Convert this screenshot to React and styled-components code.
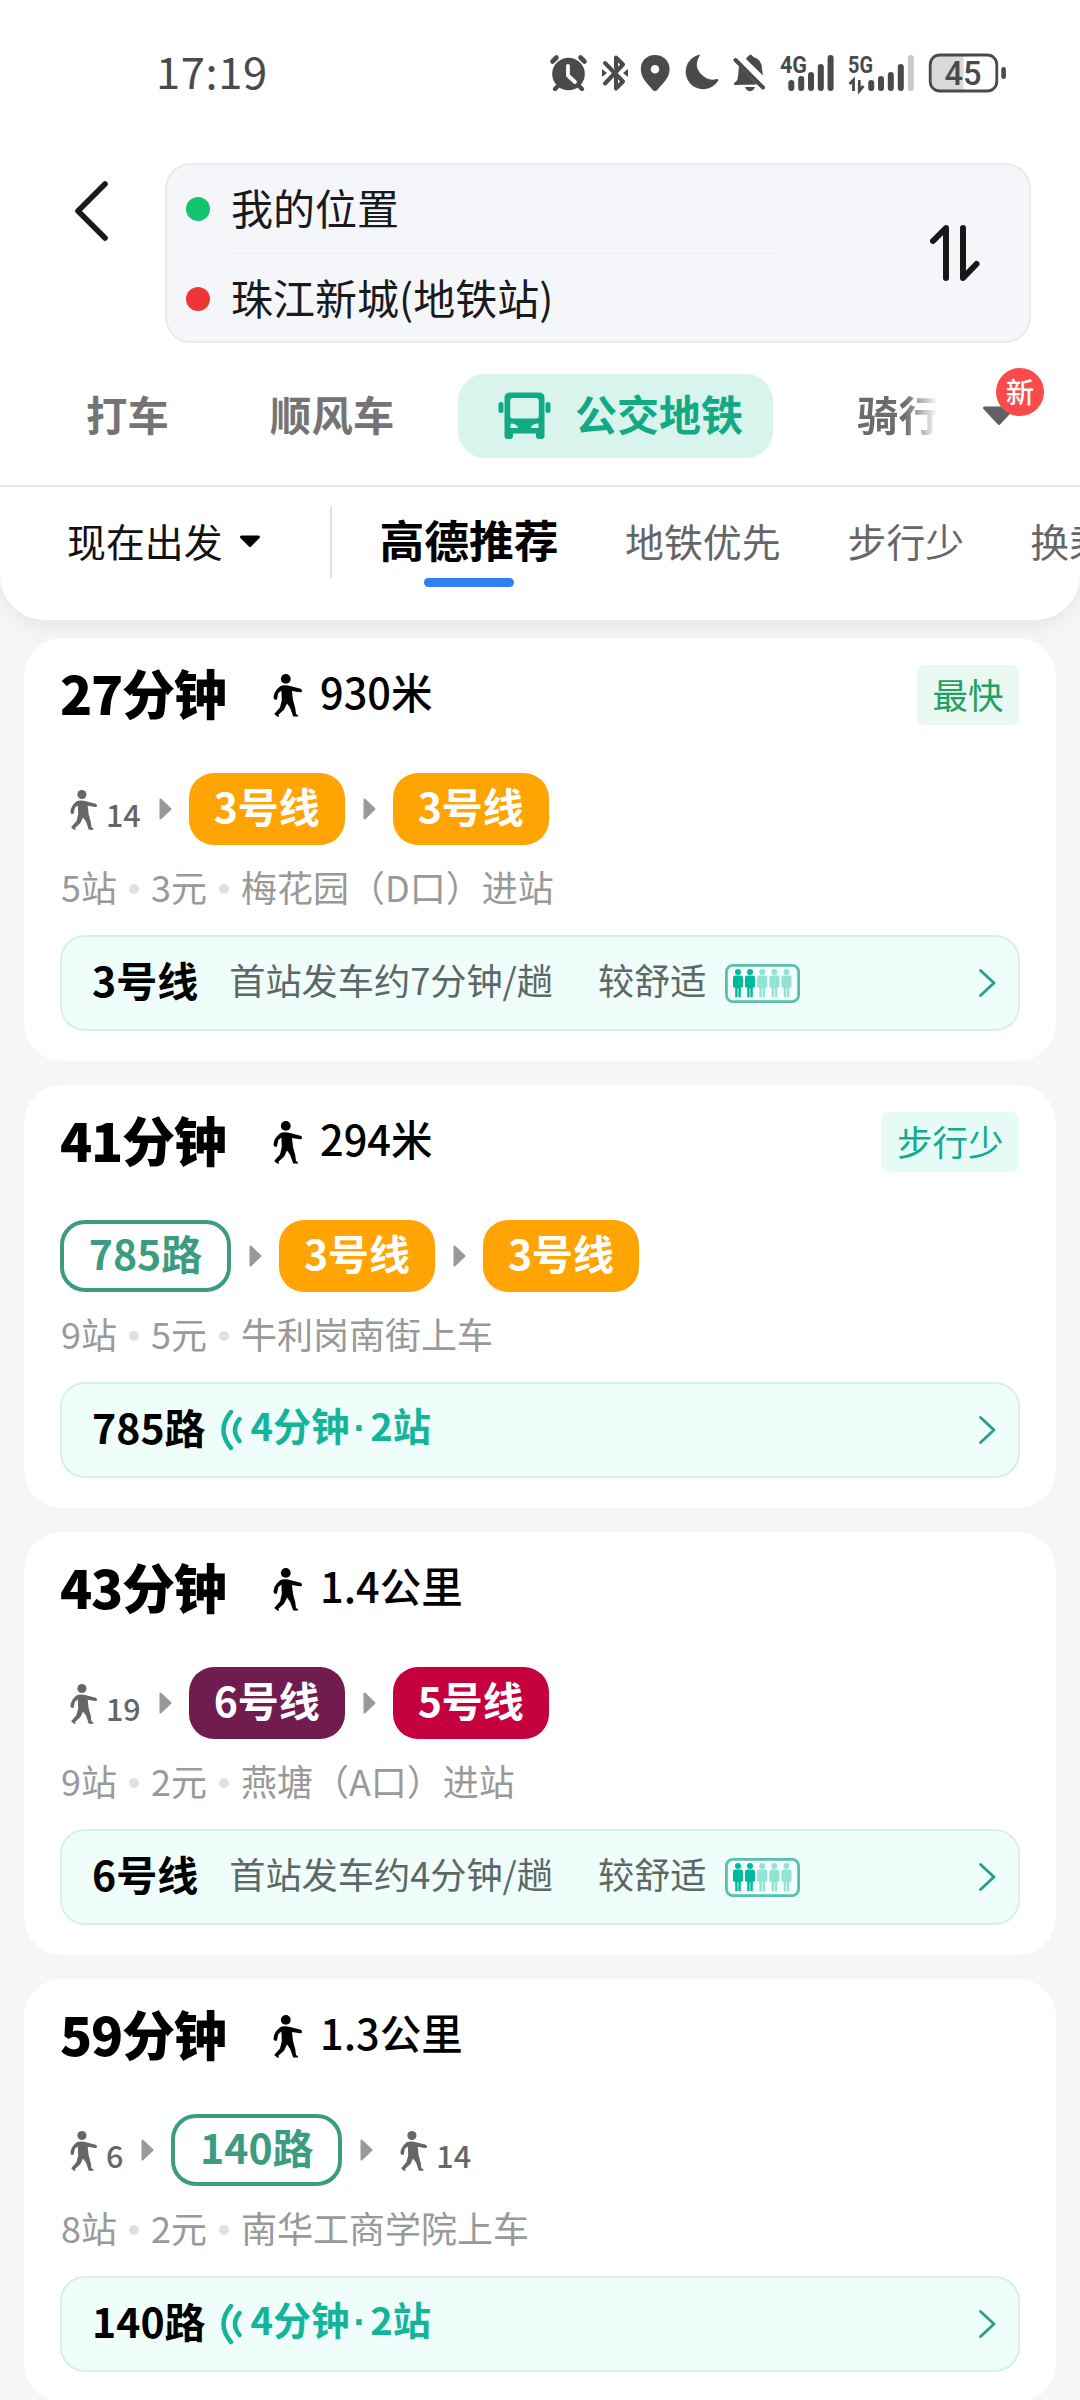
import React from "react";
import styled, { createGlobalStyle } from "styled-components";

const Global = createGlobalStyle`
  *, *::before, *::after { box-sizing: border-box; }
  html, body { margin: 0; background: #f4f6f8; }
  body {
    width: 1080px;
    font-family: "Noto Sans CJK SC", "Noto Sans", sans-serif;
    color: #000;
  }
  svg { display: block; flex: none; }
`;

const Screen = styled.div`
  width: 1080px;
  height: 2400px;
  overflow: hidden;
  display: flex;
  flex-direction: column;
  background: #f4f6f8;
`;

/* ---------- header ---------- */
const Header = styled.header`
  flex: none;
  height: 620px;
  background: #fff;
  border-radius: 0 0 45px 45px;
  box-shadow: 0 6px 22px rgba(0, 0, 0, 0.07);
  position: relative;
`;

const StatusBar = styled.div`
  height: 146px;
  padding: 0 72px 0 156px;
  display: flex;
  align-items: center;
  justify-content: space-between;
`;

const Clock = styled.span`
  font-size: 43.5px;
  line-height: 60px;
  letter-spacing: 0.6px;
  padding-bottom: 5px;
  color: #4a4a4a;
`;

const SearchRow = styled.div`
  display: flex;
  height: 180px;
  margin-top: 17px;
  padding: 0 49px 0 72px;
`;

const BackButton = styled.div`
  width: 93px;
  padding-top: 15px;
`;

const SearchBox = styled.div`
  flex: 1;
  display: flex;
  align-items: center;
  justify-content: space-between;
  border: 2px solid #e8eaec;
  border-radius: 26px;
  background: #f4f6fa;
  padding: 0 49px 0 19px;
`;

const Places = styled.div`
  width: 700px;
  padding-top: 1px;
`;

const Place = styled.div`
  height: 89px;
  display: flex;
  align-items: center;
  gap: 21px;
  font-size: 42px;
  line-height: 60px;
  color: #1a1a1a;
  span { position: relative; top: -2px; }
`;

const Dot = styled.i`
  width: 24px;
  height: 24px;
  border-radius: 50%;
  background: ${(p) => p.$color};
`;

const Separator = styled.div`
  height: 1px;
  margin-left: 46px;
  background: linear-gradient(to right, #eceef1 80%, transparent);
`;

const Modes = styled.nav`
  height: 142px;
  display: flex;
  align-items: center;
  padding: 4px 0 0 86px;
  font-size: 41.3px;
  font-weight: 700;
  line-height: 60px;
  color: #747474;
`;

const Mode = styled.span`
  flex: none;
  width: ${(p) => p.$width}px;
  letter-spacing: 0.2px;
  padding-bottom: 6px;
`;

const FadingMode = styled(Mode)`
  margin-left: 84px;
  white-space: nowrap;
  background: linear-gradient(to right, #6c6c6c 55%, rgba(150, 150, 150, 0.25) 88%, rgba(150, 150, 150, 0) 93%);
  background-clip: text;
  color: transparent;
`;

const ActiveMode = styled.div`
  flex: none;
  width: 315px;
  height: 84px;
  border-radius: 27px;
  background: #d9f4ec;
  display: flex;
  align-items: center;
  padding-left: 40px;
  gap: 24px;
  font-size: 42px;
  color: #12aa85;
  span { padding-bottom: 6px; }
`;

const MoreModes = styled.div`
  position: relative;
  width: 64px;
  height: 50px;
  margin-left: 39px;
  padding-top: 15px;
`;

const NewBadge = styled.span`
  position: absolute;
  left: 14px;
  top: -23px;
  width: 48px;
  height: 48px;
  border-radius: 50%;
  background: #fa4a4a;
  color: #fff;
  font-size: 28.5px;
  font-weight: 500;
  line-height: 45px;
  text-align: center;
`;

const SortRow = styled.div`
  height: 135px;
  border-top: 2px solid #e4e5e6;
  display: flex;
  align-items: flex-start;
  overflow: hidden;
  padding-left: 67px;
  font-size: 38.9px;
  line-height: 60px;
  white-space: nowrap;
  color: #666;
`;

const Depart = styled.div`
  flex: none;
  display: flex;
  align-items: center;
  gap: 16px;
  width: 263px;
  padding-top: 23px;
  color: #111;
  svg { margin-top: 2px; }
`;

const VLine = styled.i`
  flex: none;
  width: 2px;
  height: 72px;
  margin-top: 19px;
  background: #e0e0e0;
`;

const SortItem = styled.div`
  flex: none;
  padding-top: 23px;
  margin-left: ${(p) => p.$gap}px;
`;

const SortActive = styled.div`
  flex: none;
  width: 180px;
  margin-left: 47px;
  padding-top: 22px;
  display: flex;
  flex-direction: column;
  align-items: center;
  font-size: 44.8px;
  font-weight: 700;
  color: #000;
  &::after {
    content: "";
    width: 90px;
    height: 9px;
    margin-top: 9px;
    border-radius: 5px;
    background: #2f80f3;
  }
`;

/* ---------- routes ---------- */
const List = styled.main`
  padding: 18px 24px 0;
  display: flex;
  flex-direction: column;
  gap: 24px;
`;

const Card = styled.section`
  position: relative;
  flex: none;
  height: 423px;
  border-radius: 38px;
  background: #fff;
  padding: 27px 36px 30px;
`;

const CardHead = styled.div`
  height: 60px;
  display: flex;
  align-items: center;
`;

const Duration = styled.span`
  width: 213px;
  font-size: 53px;
  font-weight: 900;
  line-height: 60px;
  letter-spacing: -1.3px;
  position: relative;
  top: -3px;
`;

const Distance = styled.span`
  flex: 1;
  margin-left: 17px;
  font-size: 41.5px;
  font-weight: 500;
  line-height: 60px;
  position: relative;
  top: -4px;
`;

const Tag = styled.span`
  height: 60px;
  margin-right: 1px;
  padding: 0 15.5px;
  border-radius: 8px;
  font-size: 35.5px;
  line-height: 57px;
  color: ${(p) => (p.$teal ? "#12ab8f" : "#1da264")};
  background: ${(p) => (p.$teal ? "#e6faf6" : "#e9f8f1")};
`;

const Legs = styled.div`
  height: 72px;
  margin-top: 48px;
  display: flex;
  align-items: center;
`;

const WalkLeg = styled.div`
  display: flex;
  align-items: center;
  padding-left: 10px;
  gap: 8px;
  color: #666;
  font-size: 30.5px;
  font-weight: 500;
  line-height: 40px;
  span { position: relative; top: 5px; }
`;

const LinePill = styled.div`
  height: 72px;
  width: ${(p) => (p.$bus ? 171 : 156)}px;
  border-radius: 25px;
  border: ${(p) => (p.$bus ? "4px solid #3d9c80" : "0")};
  background: ${(p) => p.$color || "#fff"};
  color: ${(p) => (p.$bus ? "#3d9c80" : "#fff")};
  font-size: 41px;
  font-weight: 700;
  line-height: ${(p) => (p.$bus ? 57 : 65)}px;
  text-align: center;
`;

const Summary = styled.div`
  height: 60px;
  margin-top: 11px;
  padding-left: 1px;
  display: flex;
  align-items: center;
  gap: 12.3px;
  font-size: 36px;
  line-height: 60px;
  color: #999;
`;

const SmallDot = styled.i`
  width: 10px;
  height: 10px;
  margin: 5px 0 0 -0.6px;
  border-radius: 50%;
  background: #e0e0e0;
`;

const Notice = styled.div`
  height: 96px;
  margin-top: 19px;
  padding: 0 22px 0 30px;
  border: 2px solid #d6f0ea;
  border-radius: 25px;
  background: #effdfb;
  display: flex;
  align-items: center;
  line-height: 60px;
`;

const NoticeLine = styled.span`
  font-size: 41px;
  font-weight: 700;
  position: relative;
  top: -4px;
`;

const NoticeText = styled.span`
  margin-left: ${(p) => p.$gap}px;
  font-size: 36.2px;
  color: #5d6866;
  position: relative;
  top: -4px;
`;

const Arrival = styled.span`
  margin-left: 9px;
  font-size: 38.2px;
  font-weight: 700;
  color: #14b49b;
  position: relative;
  top: -4px;
  i {
    font-family: "Liberation Sans", sans-serif;
    font-style: normal;
    margin: 0 4px;
  }
`;

const Spacer = styled.i`
  flex: 1;
`;

const IconSlot = styled.span`
  margin: ${(p) => p.$m};
`;

const Walk = ({ h = 44 }) => (
  <svg width={(h * 30) / 44} height={h} viewBox="0 0 30 44" fill="currentColor">
    <circle cx="12.8" cy="5.9" r="4.9" />
    <path d="M7.2 13.2 Q10 11.6 15 12.6 L27.6 15.8 Q29.4 16.6 29 18.2 Q28.6 19.6 26.8 19.2 L19 18 L20 27 L22.2 35 L23 41 L25 42.2 L25 43.6 L20.2 43.6 L17.2 35 L14 30.6 L11 36.8 L5.6 41.6 L6 43.8 L4.2 43.6 L1.2 41 L7 34.4 L8.8 27 L8.4 17.6 L5.2 20.2 L4 26.4 Q.6 27.6 .5 24.4 Q.8 18.4 7.2 13.2Z" />
  </svg>
);

const StepArrow = () => (
  <IconSlot $m="0 17px 0 18px">
    <svg width="13" height="22" viewBox="0 0 13 22">
      <path d="M1.5 1.5 L11.5 11 L1.5 20.5Z" fill="#999" stroke="#999" strokeWidth="2" strokeLinejoin="round" />
    </svg>
  </IconSlot>
);

const Crowd = () => (
  <svg width="75" height="39" viewBox="0 0 75 39">
    <rect x="1.4" y="1.4" width="72.2" height="36.2" rx="6.5" fill="#f2fffd" stroke="#58c0b0" strokeWidth="2.8" />
    {[13, 25, 37.2, 49.4, 61.5].map((x, i) => (
      <g key={x} fill={i < 2 ? "#00b89e" : "#93e3d5"}>
        <circle cx={x} cy="7.9" r="3" />
        <path d={`M${x - 2.6} 11.4h5.2q2.4 0 2.4 2.4v9.4h-1.6v1h-.6v9h-2.4v-9h-.8v9h-2.4v-9h-.6v-1h-1.6v-9.4q0-2.4 2.4-2.4z`} />
      </g>
    ))}
  </svg>
);

const Waves = () => (
  <svg width="22" height="42" viewBox="0 0 22 42" fill="none" stroke="#14b49b" strokeWidth="4.4" strokeLinecap="round">
    <path d="M11 3 Q-4 21 11 39" />
    <path d="M19.500 10 Q10.500 21 19.500 32" />
  </svg>
);

const StatusIcons = () => (
  <svg width="460" height="44" viewBox="548 51 460 44" fill="#4a4a4a" fontFamily='"Roboto", sans-serif'>
    <g>
      <circle cx="568.5" cy="74" r="16.3" />
      <path d="M552.5 61.5 L556.5 57.5 M584.5 61.5 L580.5 57.5" stroke="#4a4a4a" strokeWidth="4.6" strokeLinecap="round" />
      <path d="M558 86 L555 89 M579 86 L582 89" stroke="#4a4a4a" strokeWidth="4.4" strokeLinecap="round" />
      <path d="M568 66 V75.5 L575 82" fill="none" stroke="#fff" strokeWidth="3.8" strokeLinecap="round" strokeLinejoin="round" />
    </g>
    <g fill="none" stroke="#4a4a4a" strokeWidth="4" strokeLinejoin="round" strokeLinecap="round">
      <path d="M605 63 L623 81.5 L616 88.5 V77 M605 83.5 L623 64.5 L616 57.5 V68" />
    </g>
    <path d="M602 69 L607 73 L602 77Z M628 69 L623 73 L628 77Z" />
    <path fillRule="evenodd" d="M655 55 C646.5 55 640.8 61.3 640.8 69 C640.8 79 648.5 84 652.3 89.5 Q655 92.5 657.7 89.5 C661.5 84 669.6 79 669.6 69 C669.6 61.3 663.5 55 655 55Z M655 65 A4.3 4.3 0 1 1 655 73.6 A4.3 4.3 0 1 1 655 65Z" />
    <path d="M700 55 Q693 66 701 74 Q708 81.5 716.5 79 Q718.8 78.6 718 81 A17.5 17.5 0 1 1 698 55 Q700 54.4 700 55Z" />
    <path d="M746 59 C747 57 748 56.6 749.6 55 Q750.6 54.3 751.6 55 L753.5 57 Q762 59.5 762 69 L763 75.5Z" />
    <path d="M739 66 L757 84.5 L734.5 85 Q732.8 83.5 735.5 82 Q738 80 738 76Z" />
    <path d="M745 87 H755 Q753 91.3 750 91.3 Q747 91.3 745 87Z" />
    <path d="M735.5 60 L763 87.5" stroke="#4a4a4a" strokeWidth="4" strokeLinecap="round" />
    <text x="780" y="73" fontSize="23.5" fontWeight="700" textLength="27" lengthAdjust="spacingAndGlyphs">4G</text>
    <g stroke="#4a4a4a" strokeWidth="6" strokeLinecap="round">
      <path d="M791.3 83 V88 M801.2 79 V88 M811 75 V88 M820.8 67 V88 M830.6 58 V88" />
      <path d="M871.2 83 V88 M881 79 V88 M890.8 75 V88 M900.8 67 V88" />
      <path d="M910.8 58 V88" stroke="#c9c9c9" />
    </g>
    <text x="848" y="73" fontSize="23.5" fontWeight="700" textLength="25" lengthAdjust="spacingAndGlyphs">5G</text>
    <path d="M849.5 84 L853.5 80 V91 M859.3 80 V91 L863.5 86" fill="none" stroke="#4a4a4a" strokeWidth="2.8" />
    <path d="M940 56 H963.5 V90 H940 Q930 90 930 80 V66 Q930 56 940 56Z" fill="#d9d9d9" />
    <rect x="930.2" y="55" width="66.6" height="36" rx="9.5" fill="none" stroke="#4a4a4a" strokeWidth="2.8" />
    <rect x="1001.3" y="67" width="4.6" height="12" rx="2.3" />
    <text x="944.5" y="84.7" fontSize="33" fontWeight="500" textLength="37" lengthAdjust="spacingAndGlyphs">45</text>
  </svg>
);

const Bus = () => (
  <svg width="53" height="48" viewBox="0 0 53 48" fill="#12aa85">
    <path fillRule="evenodd" d="M12 .5 H41 Q46.5 .5 46.5 6 V44 Q46.5 47 43.5 47 H41 Q38 47 38 44 V41.5 H15 V44 Q15 47 12 47 H9.5 Q6.5 47 6.5 44 V6 Q6.5 .5 12 .5Z M15 6 Q12.2 6 12.2 9 V24 Q12.2 26.5 15 26.5 H38 Q40.8 26.5 40.8 24 V9 Q40.8 6 38 6Z M12.5 31.5 V36 H20 Q19.5 31.5 12.5 31.5Z M40.5 31.5 V36 H33 Q33.5 31.5 40.5 31.5Z" />
    <rect x=".5" y="10" width="5" height="11" rx="2.5" />
    <rect x="47.5" y="10" width="5" height="11" rx="2.5" />
  </svg>
);

const ORANGE = "#ffa403";

const routes = [
  {
    time: "27分钟", distance: "930米", tag: "最快",
    legs: [{ walk: "14" }, { line: "3号线", color: ORANGE }, { line: "3号线", color: ORANGE }],
    summary: ["5站", "3元", "梅花园（D口）进站"],
    notice: { line: "3号线", text: "首站发车约7分钟/趟" },
  },
  {
    time: "41分钟", distance: "294米", tag: "步行少", teal: true,
    legs: [{ bus: "785路" }, { line: "3号线", color: ORANGE }, { line: "3号线", color: ORANGE }],
    summary: ["9站", "5元", "牛利岗南街上车"],
    notice: { bus: "785路", wait: "4分钟", stops: "2站" },
  },
  {
    time: "43分钟", distance: "1.4公里",
    legs: [{ walk: "19" }, { line: "6号线", color: "#701c4f" }, { line: "5号线", color: "#c5003e" }],
    summary: ["9站", "2元", "燕塘（A口）进站"],
    notice: { line: "6号线", text: "首站发车约4分钟/趟" },
  },
  {
    time: "59分钟", distance: "1.3公里",
    legs: [{ walk: "6" }, { bus: "140路" }, { walk: "14" }],
    summary: ["8站", "2元", "南华工商学院上车"],
    notice: { bus: "140路", wait: "4分钟", stops: "2站" },
  },
];

const Leg = ({ leg }) => {
  if (leg.walk) return <WalkLeg><Walk h={41} /><span>{leg.walk}</span></WalkLeg>;
  if (leg.bus) return <LinePill $bus>{leg.bus}</LinePill>;
  return <LinePill $color={leg.color}>{leg.line}</LinePill>;
};

const RouteCard = ({ route }) => (
  <Card>
    <CardHead>
      <Duration>{route.time}</Duration>
      <Walk />
      <Distance>{route.distance}</Distance>
      {route.tag && <Tag $teal={route.teal}>{route.tag}</Tag>}
    </CardHead>
    <Legs>
      {route.legs.map((leg, i) => (
        <React.Fragment key={i}>
          {i > 0 && <StepArrow />}
          <Leg leg={leg} />
        </React.Fragment>
      ))}
    </Legs>
    <Summary>
      {route.summary.map((s, i) => (
        <React.Fragment key={s}>
          {i > 0 && <SmallDot />}
          <span>{s}</span>
        </React.Fragment>
      ))}
    </Summary>
    <Notice>
      <NoticeLine>{route.notice.bus || route.notice.line}</NoticeLine>
      {route.notice.bus ? (
        <>
          <IconSlot $m="0 0 0 14px"><Waves /></IconSlot>
          <Arrival>{route.notice.wait}<i>·</i>{route.notice.stops}</Arrival>
        </>
      ) : (
        <>
          <NoticeText $gap={31}>{route.notice.text}</NoticeText>
          <NoticeText $gap={45}>较舒适</NoticeText>
          <IconSlot $m="0 0 0 18px"><Crowd /></IconSlot>
        </>
      )}
      <Spacer />
      <svg width="18" height="30" viewBox="0 0 18 30" fill="none" stroke="#2a9d8a" strokeWidth="2.8" strokeLinecap="round" strokeLinejoin="round">
        <path d="M2.5 2.5 L16 15 L2.5 27.5" />
      </svg>
    </Notice>
  </Card>
);

export default function App() {
  return (
    <Screen>
      <Global />
      <Header>
        <StatusBar>
          <Clock>17:19</Clock>
          <StatusIcons />
        </StatusBar>
        <SearchRow>
          <BackButton>
            <svg width="40" height="66" viewBox="0 0 40 66" fill="none" stroke="#1a1a1a" strokeWidth="5.6" strokeLinecap="round" strokeLinejoin="round">
              <path d="M33 6 L6 33 L33 60" />
            </svg>
          </BackButton>
          <SearchBox>
            <Places>
              <Place><Dot $color="#12c46d" /><span>我的位置</span></Place>
              <Separator />
              <Place><Dot $color="#ee3636" /><span>珠江新城(地铁站)</span></Place>
            </Places>
            <svg width="50" height="60" viewBox="0 0 50 60" fill="none" stroke="#171717" strokeWidth="6" strokeLinecap="round" strokeLinejoin="round">
              <path d="M16 55 V5 L3 18" />
              <path d="M33 5 V55 L46.5 41" />
            </svg>
          </SearchBox>
        </SearchRow>
        <Modes>
          <Mode $width={184}>打车</Mode>
          <Mode $width={188}>顺风车</Mode>
          <ActiveMode><Bus /><span>公交地铁</span></ActiveMode>
          <FadingMode $width={86}>骑行</FadingMode>
          <MoreModes>
            <svg width="34" height="20" viewBox="0 0 34 20">
              <path d="M2.5 2 H31.5 L17 17.5Z" fill="#606067" stroke="#606067" strokeWidth="3" strokeLinejoin="round" />
            </svg>
            <NewBadge>新</NewBadge>
          </MoreModes>
        </Modes>
        <SortRow>
          <Depart>
            <span>现在出发</span>
            <svg width="22" height="13" viewBox="0 0 22 13">
              <path d="M2.5 2 H19.5 L11 10.5Z" fill="#000" stroke="#000" strokeWidth="3" strokeLinejoin="round" />
            </svg>
          </Depart>
          <VLine />
          <SortActive>高德推荐</SortActive>
          <SortItem $gap={66}>地铁优先</SortItem>
          <SortItem $gap={67}>步行少</SortItem>
          <SortItem $gap={66}>换乘少</SortItem>
        </SortRow>
      </Header>
      <List>
        {routes.map((r) => <RouteCard key={r.time} route={r} />)}
      </List>
    </Screen>
  );
}
